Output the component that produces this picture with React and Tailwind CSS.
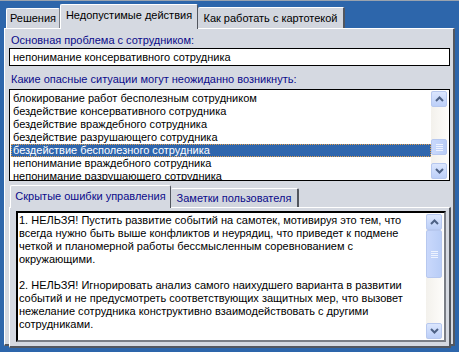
import React from "react";

const font = { fontFamily: '"Liberation Sans", Arial, sans-serif' };

const items = [
  "блокирование работ бесполезным сотрудником",
  "бездействие консервативного сотрудника",
  "бездействие враждебного сотрудника",
  "бездействие разрушающего сотрудника",
  "бездействие бесполезного сотрудника",
  "непонимание враждебного сотрудника",
  "непонимание разрушающего сотрудника",
];

function Arrow({ up }) {
  return (
    <svg width="9" height="6" viewBox="0 0 9 6">
      <path
        d={up ? "M1 5 L4.5 1.5 L8 5" : "M1 1 L4.5 4.5 L8 1"}
        fill="none"
        stroke="#4d6185"
        strokeWidth="2"
      />
    </svg>
  );
}

function SbButton({ up }) {
  return (
    <div className="w-[16px] h-[16px] rounded-[2px] border border-[#b7c8ef] bg-gradient-to-b from-[#dbe6fd] to-[#bccff8] flex items-center justify-center">
      <Arrow up={up} />
    </div>
  );
}

function Thumb({ h }) {
  return (
    <div
      className="w-[16px] rounded-[2px] border border-[#b7c8ef] bg-gradient-to-r from-[#c9d8fb] to-[#b9cdf7] flex flex-col items-center justify-center gap-[1px]"
      style={{ height: h }}
    >
      <div className="w-[7px] h-[1px] bg-[#eef3fe]" />
      <div className="w-[7px] h-[1px] bg-[#eef3fe]" />
      <div className="w-[7px] h-[1px] bg-[#eef3fe]" />
      <div className="w-[7px] h-[1px] bg-[#eef3fe]" />
    </div>
  );
}

function Scrollbar({ before, thumb }) {
  return (
    <div className="w-[17px] h-full bg-gradient-to-r from-[#f3f1ec] to-[#fdfcfa] flex flex-col">
      <SbButton up />
      <div style={{ height: before }} />
      <Thumb h={thumb} />
      <div className="flex-1" />
      <SbButton />
    </div>
  );
}

export default function App() {
  return (
    <div
      className="w-[459px] h-[352px] bg-[#2d66ab] border-t border-[#9aa3ae] pl-[4px] pt-[3px] text-[11px] text-black overflow-hidden"
      style={font}
    >
      {/* outer tabs */}
      <div className="flex items-end h-[24px] pl-[2px]">
        <div className="h-[20px] w-[54px] bg-[#d2d6de] border-t border-l border-white border-r border-r-[#7a7e86] rounded-t-[2px] flex items-center justify-center">
          Решения
        </div>
        <div className="relative z-10 h-[25px] w-[138px] -mb-[1px] bg-[#d5d9e1] border-t border-l border-white border-r border-r-[#52565e] rounded-t-[2px] flex items-center justify-center pb-[3px]">
          Недопустимые действия
        </div>
        <div className="h-[21px] w-[147px] bg-[#d2d6de] border-t border-white border-r-2 border-r-[#52565e] rounded-t-[2px] flex items-center justify-center">
          Как работать с картотекой
        </div>
      </div>

      {/* outer panel */}
      <div className="w-[451px] h-[318px] bg-[#d5d9e1] border-t border-l border-white border-r-2 border-b-2 border-r-[#53575f] border-b-[#53575f] px-[4px] pt-[3px]">
        <div className="text-[#0b0b8a] h-[16px] leading-[16px] pl-[2px]">
          Основная проблема с сотрудником:
        </div>
        <div className="h-[18px] w-[441px] bg-white border border-black leading-[16px] pl-[3px]">
          непонимание консервативного сотрудника
        </div>
        <div className="text-[#0b0b8a] h-[16px] leading-[16px] mt-[5px] pl-[2px]">
          Какие опасные ситуации могут неожиданно возникнуть:
        </div>
        <div className="mt-[2px] h-[92px] w-[441px] bg-white border border-black flex">
          <div className="flex-1 pt-[2px] pl-[1px] overflow-hidden">
            {items.map((t, i) => (
              <div
                key={i}
                className={
                  "h-[13px] leading-[13px] pl-[2px] " +
                  (i === 4
                    ? "bg-[#2f66ad] text-white outline outline-1 outline-dotted outline-[#e0a050] -outline-offset-1"
                    : "")
                }
              >
                {t}
              </div>
            ))}
          </div>
          <div className="pt-[1px] pb-[1px] pr-[1px]">
            <Scrollbar before={32} thumb={16} />
          </div>
        </div>

        {/* inner tabs */}
        <div className="flex items-end h-[25px] pl-[1px] mt-[1px]">
          <div className="relative z-10 h-[23px] w-[161px] -mb-[1px] bg-[#d5d9e1] border-t border-l border-white border-r border-r-[#52565e] rounded-t-[2px] flex items-center justify-center pb-[2px] text-[#0b0b8a]">
            Скрытые ошибки управления
          </div>
          <div className="h-[19px] w-[128px] bg-[#d2d6de] border-t border-white border-r-2 border-r-[#52565e] rounded-t-[2px] flex items-center justify-center text-[#0b0b8a]">
            Заметки пользователя
          </div>
        </div>
        <div className="w-[442px] h-[141px] bg-[#d5d9e1] border-t border-l border-white border-r-2 border-b-2 border-r-[#53575f] border-b-[#53575f] p-[3px] pl-[6px]">
          <div className="w-[430px] h-[131px] bg-white border-2 border-t-black border-l-black border-r-[#7a7e86] border-b-[#7a7e86] flex">
            <div className="flex-1 pt-[1px] pl-[1px] pr-[4px] leading-[13px]">
              <p>
                1. НЕЛЬЗЯ! Пустить развитие событий на самотек, мотивируя это тем, что
                всегда нужно быть выше конфликтов и неурядиц, что приведет к подмене
                четкой и планомерной работы бессмысленным соревнованием с
                окружающими.
              </p>
              <p className="mt-[13px]">
                2. НЕЛЬЗЯ! Игнорировать анализ самого наихудшего варианта в развитии
                событий и не предусмотреть соответствующих защитных мер, что вызовет
                нежелание сотрудника конструктивно взаимодействовать с другими
                сотрудниками.
              </p>
            </div>
            <div className="py-[1px] pr-[1px]">
              <Scrollbar before={0} thumb={48} />
            </div>
          </div>
        </div>
      </div>
    </div>
  );
}
